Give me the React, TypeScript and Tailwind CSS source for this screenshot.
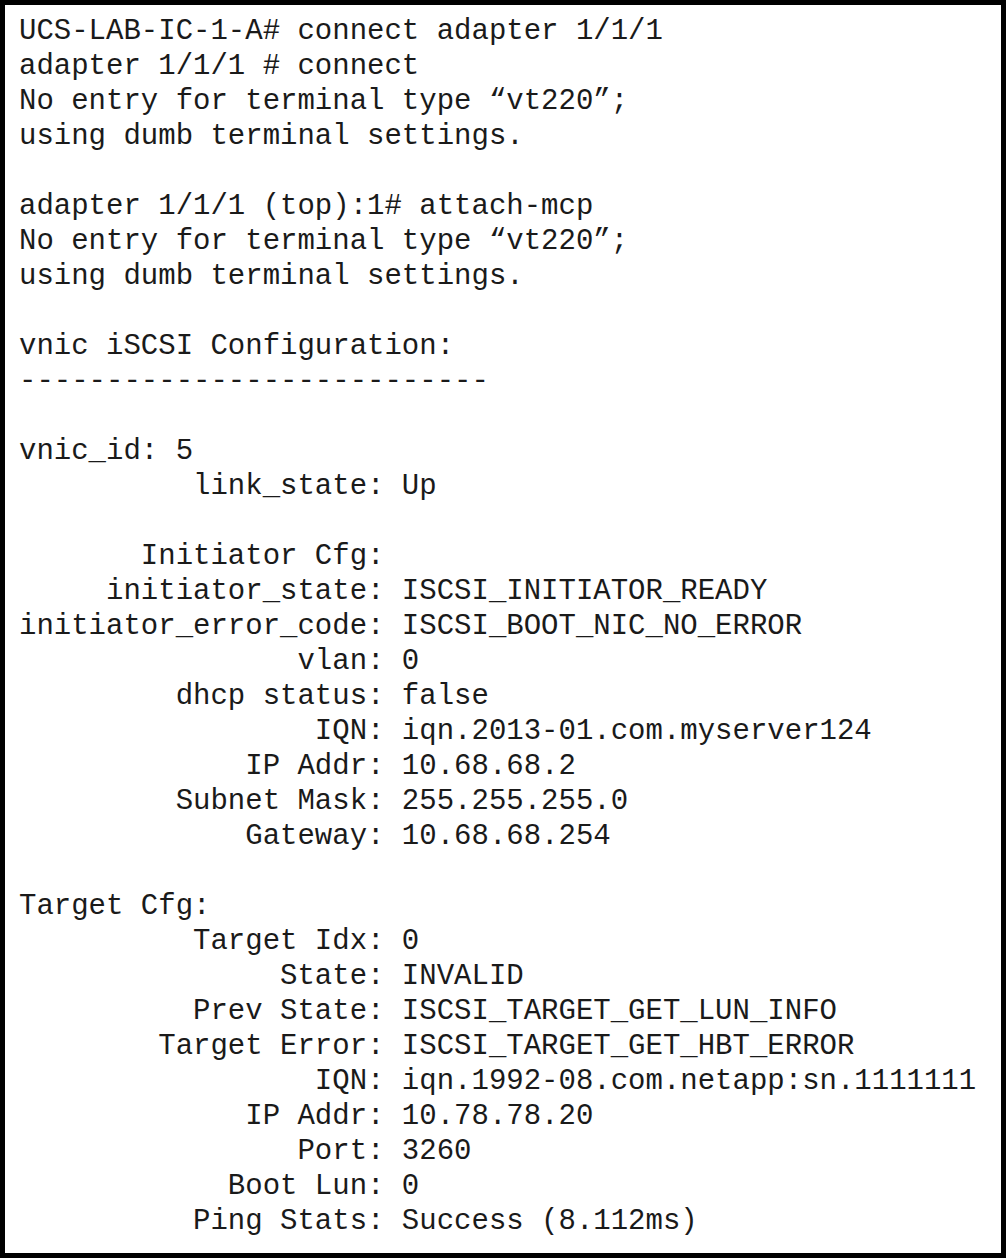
import React from 'react';

const lines: string[] = [
  'UCS-LAB-IC-1-A# connect adapter 1/1/1',
  'adapter 1/1/1 # connect',
  'No entry for terminal type \u201cvt220\u201d;',
  'using dumb terminal settings.',
  '',
  'adapter 1/1/1 (top):1# attach-mcp',
  'No entry for terminal type \u201cvt220\u201d;',
  'using dumb terminal settings.',
  '',
  'vnic iSCSI Configuration:',
  '---------------------------',
  '',
  'vnic_id: 5',
  '          link_state: Up',
  '',
  '       Initiator Cfg:',
  '     initiator_state: ISCSI_INITIATOR_READY',
  'initiator_error_code: ISCSI_BOOT_NIC_NO_ERROR',
  '                vlan: 0',
  '         dhcp status: false',
  '                 IQN: iqn.2013-01.com.myserver124',
  '             IP Addr: 10.68.68.2',
  '         Subnet Mask: 255.255.255.0',
  '             Gateway: 10.68.68.254',
  '',
  'Target Cfg:',
  '          Target Idx: 0',
  '               State: INVALID',
  '          Prev State: ISCSI_TARGET_GET_LUN_INFO',
  '        Target Error: ISCSI_TARGET_GET_HBT_ERROR',
  '                 IQN: iqn.1992-08.com.netapp:sn.1111111',
  '             IP Addr: 10.78.78.20',
  '                Port: 3260',
  '            Boot Lun: 0',
  '          Ping Stats: Success (8.112ms)',
];

const App: React.FC = () => {
  return (
    <div className="w-[1006px] h-[1258px] bg-white">
      {/* Terminal capture */}
      <div className="box-border h-full w-full border-[5px] border-black bg-white pl-[14px] pt-[9px]">
        <pre className="m-0 whitespace-pre font-['Liberation_Mono','Courier_New',monospace] text-[29px] leading-[35px] text-[#1a1a1a]">
          {lines.map((line, i) => (
            <div key={i} className="h-[35px]">{line}</div>
          ))}
        </pre>
      </div>
    </div>
  );
};

export default App;
